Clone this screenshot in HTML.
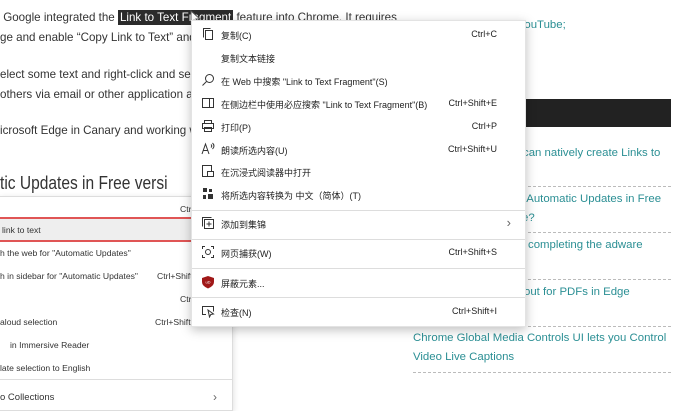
<!DOCTYPE html>
<html><head><meta charset="utf-8"><style>
*{margin:0;padding:0;box-sizing:border-box}
body{width:700px;height:411px;overflow:hidden;background:#fff;position:relative;font-family:"Liberation Sans","Noto Sans CJK SC",sans-serif}
.a{position:absolute;white-space:nowrap}
.t{font-size:11.6px;color:#333}
.sel{background:#2b2b2b;color:#fff;padding:1px 2px}
.lk{font-size:11.4px;color:#2b8f94}
.dash{position:absolute;left:413px;width:258px;border-top:1px dashed #bbb}
.im{position:absolute;left:0;top:196px;width:233px;height:215px;border:1px solid #ddd;border-left:none;background:#fff;box-shadow:0 2px 6px rgba(0,0,0,.15)}
.im .r{position:absolute;font-size:8.6px;color:#333;white-space:nowrap}
.menu{position:absolute;left:191px;top:20px;width:335px;height:307px;background:#fff;border:1px solid #e3e3e3;box-shadow:0 3px 10px rgba(0,0,0,.25)}
.mi{position:absolute;left:0;width:333px;font-size:9px;color:#222;white-space:nowrap}
.mi .l{position:absolute;left:29px}
.mi .s{position:absolute;right:28px}
.mi svg{position:absolute;left:9px;top:-2px}
.sep{position:absolute;left:0;width:333px;border-top:1px solid #ddd}
</style></head><body>
<div class="a t" style="left:0;top:11px">&nbsp;Google integrated the <span class="sel">Link to Text Fragment</span> feature into Chrome. It requires</div>
<div class="a t" style="left:0;top:31px">ge and enable “Copy Link to Text” and r</div>
<div class="a t" style="left:0;top:68px">elect some text and right-click and sele</div>
<div class="a t" style="left:0;top:88px">others via email or other application a</div>
<div class="a t" style="left:0;top:124px">icrosoft Edge in Canary and working w</div>
<div class="a" style="left:0;top:172px;font-size:18.5px;color:#333;transform:scaleX(0.84);transform-origin:0 0">tic Updates in Free versi</div>

<div class="a lk" style="left:506px;top:19px">k; YouTube;</div>
<div class="a" style="left:413px;top:99px;width:258px;height:28px;background:#222"></div>
<div class="a lk" style="left:523px;top:147px">can natively create Links to</div>
<div class="dash" style="top:186px"></div>
<div class="a lk" style="left:518px;top:193px">s Automatic Updates in Free</div>
<div class="a lk" style="left:522px;top:212px">e?</div>
<div class="dash" style="top:232px"></div>
<div class="a lk" style="left:528px;top:239px">completing the adware</div>
<div class="dash" style="top:279px"></div>
<div class="a lk" style="left:524px;top:286px">out for PDFs in Edge</div>
<div class="dash" style="top:326px"></div>
<div class="a lk" style="left:413px;top:332px">Chrome Global Media Controls UI lets you Control</div>
<div class="a lk" style="left:413px;top:351px">Video Live Captions</div>
<div class="dash" style="top:372px"></div>

<div class="im">
<div class="r" style="left:180px;top:7px">Ctrl</div>
<div style="position:absolute;left:0;top:20px;width:232px;height:25px;background:#eee;border-top:2px solid #e05555;border-bottom:2px solid #e05555"></div>
<div class="r" style="left:2px;top:28px">link to text</div>
<div class="r" style="left:0;top:51px">h the web for "Automatic Updates"</div>
<div class="r" style="left:0;top:74px">h in sidebar for "Automatic Updates"</div>
<div class="r" style="left:157px;top:74px">Ctrl+Shift</div>
<div class="r" style="left:180px;top:97px">Ctrl</div>
<div class="r" style="left:0;top:120px">aloud selection</div>
<div class="r" style="left:155px;top:120px">Ctrl+Shift</div>
<div class="r" style="left:10px;top:143px">in Immersive Reader</div>
<div class="r" style="left:0;top:166px">late selection to English</div>
<div style="position:absolute;left:0;top:182px;width:232px;border-top:1px solid #ddd"></div>
<div class="r" style="left:0;top:195px;font-size:9.5px">o Collections</div>
<div class="r" style="left:213px;top:193px;font-size:12px;color:#666">›</div>
</div>

<svg class="a" style="left:190px;top:10px" width="12" height="16" viewBox="0 0 12 16"><path d="M1 1 L1 13 L4 10 L7 15 L9 14 L6 9 L10 9 Z" fill="#fff" stroke="#555" stroke-width="1"/></svg>

<div class="menu">
<div class="mi" style="top:8px"><svg width="14" height="14" viewBox="0 0 14 14" fill="none" stroke="#333"><rect x="4.5" y="3.5" width="7" height="9"/><path d="M2.5 10.5V1.5h7"/></svg><span class="l">复制(C)</span><span class="s">Ctrl+C</span></div>
<div class="mi" style="top:31px"><span class="l">复制文本链接</span></div>
<div class="mi" style="top:54px"><svg width="14" height="14" viewBox="0 0 14 14" fill="none" stroke="#333"><circle cx="8.5" cy="5.5" r="4"/><path d="M5.5 8.5L1.5 12.5"/></svg><span class="l">在 Web 中搜索 "Link to Text Fragment"(S)</span></div>
<div class="mi" style="top:77px"><svg width="14" height="14" viewBox="0 0 14 14" fill="none" stroke="#333"><rect x="1.5" y="2.5" width="11" height="9"/><path d="M8.5 2.5v9"/></svg><span class="l">在侧边栏中使用必应搜索 "Link to Text Fragment"(B)</span><span class="s">Ctrl+Shift+E</span></div>
<div class="mi" style="top:100px"><svg width="14" height="14" viewBox="0 0 14 14" fill="none" stroke="#333"><rect x="3.5" y="1.5" width="7" height="3"/><rect x="1.5" y="4.5" width="11" height="5"/><rect x="3.5" y="8.5" width="7" height="4"/></svg><span class="l">打印(P)</span><span class="s">Ctrl+P</span></div>
<div class="mi" style="top:123px"><svg width="14" height="14" viewBox="0 0 14 14" fill="none" stroke="#333"><path d="M1 12L4.5 2 8 12M2.3 8.5h4.4M10 2.5q1.5 1.5 0 3M11.5 1q3 3 0 6"/></svg><span class="l">朗读所选内容(U)</span><span class="s">Ctrl+Shift+U</span></div>
<div class="mi" style="top:145px"><svg width="14" height="14" viewBox="0 0 14 14" fill="none" stroke="#333"><rect x="1.5" y="1.5" width="9" height="11"/><rect x="6.5" y="7.5" width="6" height="5" fill="#fff"/></svg><span class="l">在沉浸式阅读器中打开</span></div>
<div class="mi" style="top:168px"><svg width="14" height="14" viewBox="0 0 14 14" fill="#333"><rect x="2" y="1" width="4" height="4"/><rect x="8" y="2" width="3" height="3"/><rect x="2" y="8" width="3" height="4"/><rect x="7" y="7" width="5" height="5"/></svg><span class="l">将所选内容转换为 中文（简体）(T)</span></div>
<div class="sep" style="top:189px"></div>
<div class="mi" style="top:197px"><svg width="14" height="14" viewBox="0 0 14 14" fill="none" stroke="#333"><rect x="3.5" y="3.5" width="9" height="9"/><path d="M1.5 10.5v-9h9M8 5.5v5M5.5 8h5"/></svg><span class="l">添加到集锦</span><span class="s" style="right:14px;font-size:13px;top:-3px;color:#666">›</span></div>
<div class="sep" style="top:218px"></div>
<div class="mi" style="top:226px"><svg width="14" height="14" viewBox="0 0 14 14" fill="none" stroke="#333"><path d="M1.5 4V1.5H4M10 1.5h2.5V4M12.5 10v2.5H10M4 12.5H1.5V10"/><circle cx="7" cy="7" r="2.5"/></svg><span class="l">网页捕获(W)</span><span class="s">Ctrl+Shift+S</span></div>
<div class="sep" style="top:247px"></div>
<div class="mi" style="top:256px"><svg width="14" height="14" viewBox="0 0 14 14"><path d="M7 1L13 3V7Q13 11 7 13.5Q1 11 1 7V3Z" fill="#a01818"/><text x="7" y="8.5" font-size="4" fill="#fff" text-anchor="middle" font-family="Liberation Sans">uD</text></svg><span class="l">屏蔽元素...</span></div>
<div class="sep" style="top:276px"></div>
<div class="mi" style="top:285px"><svg width="14" height="14" viewBox="0 0 14 14" fill="none" stroke="#333"><path d="M5 10.5H1.5v-8h11v5"/><path d="M7 6l1.5 7 1.3-2.5 2.7-.5z"/></svg><span class="l">检查(N)</span><span class="s">Ctrl+Shift+I</span></div>
</div>
</body></html>
